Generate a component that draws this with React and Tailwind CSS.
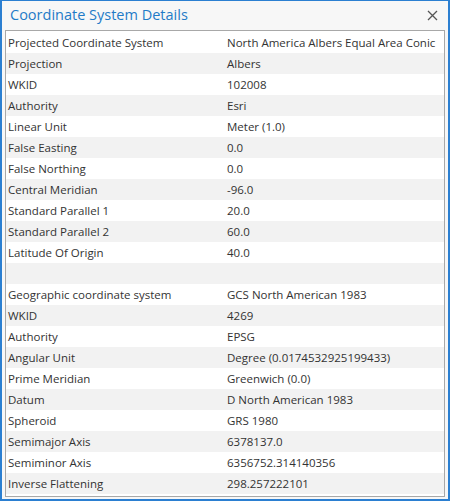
import React from 'react';

const ROWS = [
  ['Projected Coordinate System', 'North America Albers Equal Area Conic'],
  ['Projection', 'Albers'],
  ['WKID', '102008'],
  ['Authority', 'Esri'],
  ['Linear Unit', 'Meter (1.0)'],
  ['False Easting', '0.0'],
  ['False Northing', '0.0'],
  ['Central Meridian', '-96.0'],
  ['Standard Parallel 1', '20.0'],
  ['Standard Parallel 2', '60.0'],
  ['Latitude Of Origin', '40.0'],
  ['', ''],
  ['Geographic coordinate system', 'GCS North American 1983'],
  ['WKID', '4269'],
  ['Authority', 'EPSG'],
  ['Angular Unit', 'Degree (0.0174532925199433)'],
  ['Prime Meridian', 'Greenwich (0.0)'],
  ['Datum', 'D North American 1983'],
  ['Spheroid', 'GRS 1980'],
  ['Semimajor Axis', '6378137.0'],
  ['Semiminor Axis', '6356752.314140356'],
  ['Inverse Flattening', '298.257222101'],
];

export default function App() {
  return (
    <div
      className="w-[450px] h-[501px] bg-[#f7f7f7] border-2 border-t border-[#2b7fd1] flex flex-col"
      style={{ fontFamily: '"Open Sans", "Noto Sans", sans-serif' }}
    >
      <div className="h-[28px] flex items-center justify-between pl-[8px] pr-[10px] shrink-0">
        <span className="text-[14.5px] text-[#1f7bc7] leading-none">Coordinate System Details</span>
        <svg width="11" height="11" viewBox="0 0 11 11" className="text-[#555]">
          <path d="M1 1 L10 10 M10 1 L1 10" stroke="currentColor" strokeWidth="1.3" />
        </svg>
      </div>
      <div className="mx-[3px] mt-[1px] border border-[#a8a8a8] bg-white pt-[1px] h-[467px]">
        {ROWS.map(([k, v], i) => (
          <div
            key={i}
            className={`h-[21px] flex items-center text-[11.5px] text-[#333] ${i % 2 ? 'bg-[#f2f2f2]' : 'bg-white'}`}
          >
            <span className="w-[221px] pl-[2px] shrink-0">{k}</span>
            <span>{v}</span>
          </div>
        ))}
      </div>
    </div>
  );
}
